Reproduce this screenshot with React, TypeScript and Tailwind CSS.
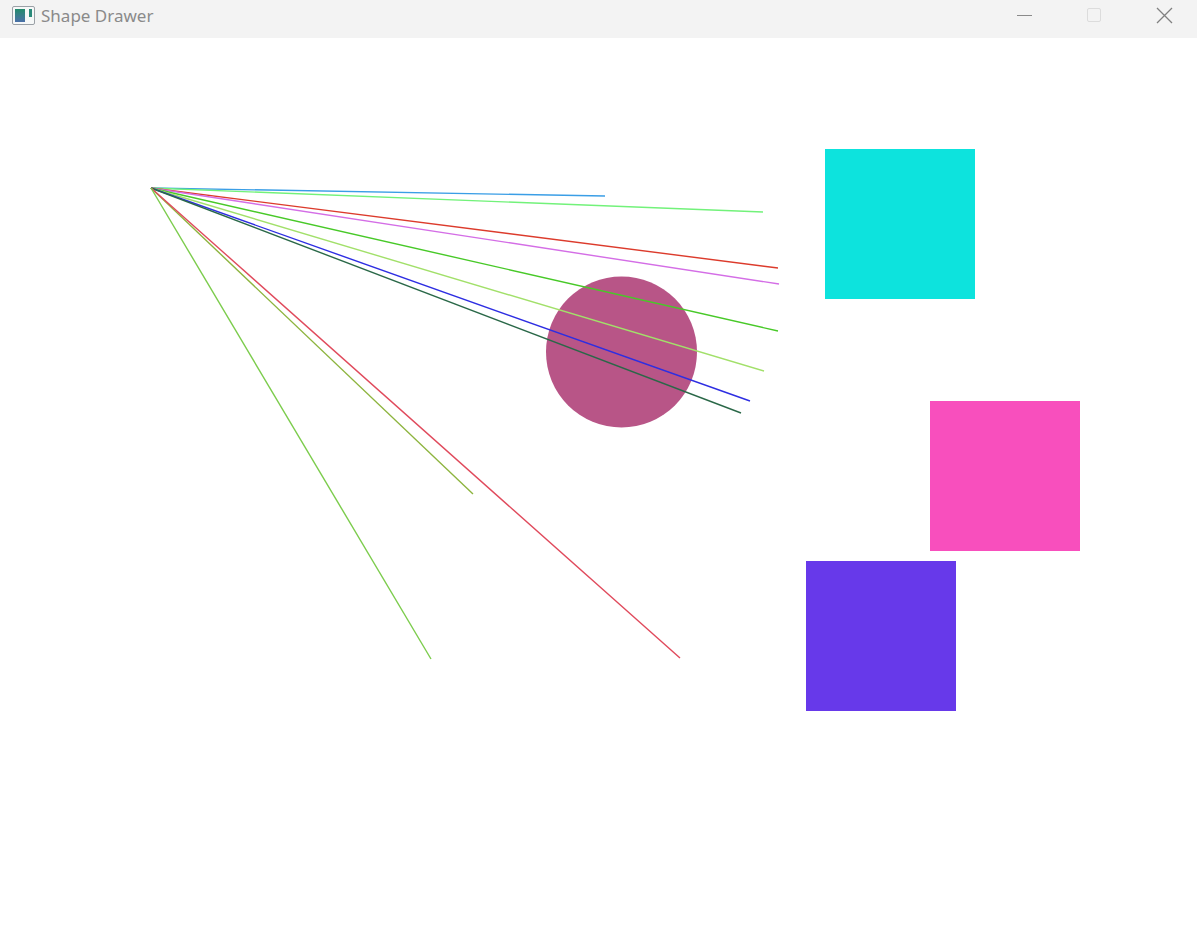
import React from "react";

const O = { x: 151, y: 188 };
const lines: { x: number; y: number; c: string }[] = [
  { x: 605, y: 196, c: "#3a9ee6" },
  { x: 763, y: 212, c: "#72f27a" },
  { x: 778, y: 268, c: "#dc3b2c" },
  { x: 779, y: 284, c: "#d46ee6" },
  { x: 778, y: 331, c: "#48c928" },
  { x: 764, y: 371, c: "#a2e06a" },
  { x: 750, y: 401, c: "#2e2ee2" },
  { x: 741, y: 413, c: "#2a6848" },
  { x: 473, y: 494, c: "#8db43e" },
  { x: 680, y: 658, c: "#e04a5c" },
  { x: 431, y: 659, c: "#7ccc4c" },
];

export default function App() {
  const top = 38;
  return (
    <div className="w-[1197px] h-[933px] flex flex-col bg-white overflow-hidden" style={{ fontFamily: "'Noto Sans', 'Open Sans', sans-serif" }}>
      <div className="h-[38px] bg-[#f3f3f3] flex items-center shrink-0">
        <div className="ml-[12px] w-[23px] h-[19px] mt-[-8px] border border-[#9aa0a6] rounded-[2px] bg-[#f6f8f8] flex p-[2px] gap-[1px]">
          <div className="w-[10px] h-full bg-gradient-to-b from-[#1f8a6a] to-[#4a6fa8]" />
          <div className="flex-1 flex justify-end">
            <div className="w-[3px] h-[8px] bg-[#2a8a7a]" />
          </div>
        </div>
        <div className="ml-[6px] mt-[-8px] text-[17px] text-[#8a8a8a] leading-none">Shape Drawer</div>
        <div className="flex-1" />
        <div className="w-[70px] h-full flex items-center justify-center mt-[-8px]">
          <div className="w-[15px] h-px bg-[#8a8a8a]" />
        </div>
        <div className="w-[70px] h-full flex items-center justify-center mt-[-8px]">
          <div className="w-[14px] h-[14px] border border-[#dcdcdc] rounded-[2px]" />
        </div>
        <div className="w-[70px] h-full flex items-center justify-center mt-[-8px] mr-[-2px]">
          <svg width="17" height="17" viewBox="0 0 17 17">
            <path d="M1 1 L16 16 M16 1 L1 16" stroke="#808080" strokeWidth="1.3" fill="none" />
          </svg>
        </div>
      </div>
      <div className="flex-1 relative bg-white">
        <svg className="absolute inset-0" width="1197" height="895" viewBox="0 0 1197 895">
          <circle cx="621.5" cy={352 - top} r="75.5" fill="#b85587" />
          {lines.map((l, i) => (
            <line
              key={i}
              x1={O.x}
              y1={O.y - top}
              x2={l.x}
              y2={l.y - top}
              stroke={l.c}
              strokeWidth="1.4"
            />
          ))}
          <rect x="825" y={149 - top} width="150" height="150" fill="#0de3dd" />
          <rect x="930" y={401 - top} width="150" height="150" fill="#f84fbd" />
          <rect x="806" y={561 - top} width="150" height="150" fill="#6739ea" />
        </svg>
      </div>
    </div>
  );
}
